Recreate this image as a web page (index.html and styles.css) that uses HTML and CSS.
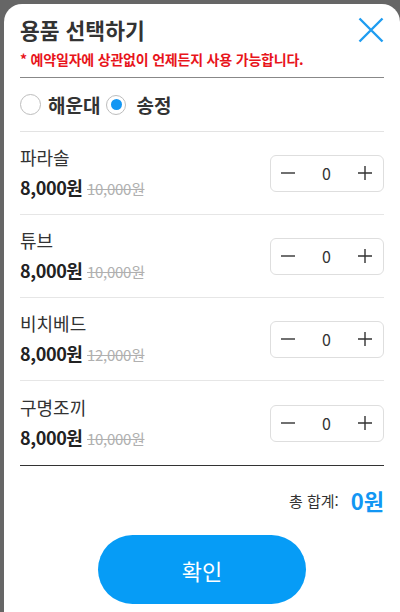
FILE: index.html
```html
<!DOCTYPE html>
<html lang="ko">
<head>
<meta charset="utf-8">
<title>용품 선택하기</title>
<link rel="stylesheet" href="styles.css">
</head>
<body>
<div class="modal">
  <div class="header">
    <h1 class="title">용품 선택하기</h1>
    <button class="close" aria-label="닫기">
      <svg width="26" height="26" viewBox="0 0 26 26"><path d="M1.5 1.5 L24.5 24.5 M24.5 1.5 L1.5 24.5" stroke="#1f9cf0" stroke-width="2.4" fill="none"/></svg>
    </button>
  </div>
  <p class="notice">* 예약일자에 상관없이 언제든지 사용 가능합니다.</p>
  <div class="places">
    <label class="place"><span class="radio"></span><span class="place-name">해운대</span></label>
    <label class="place"><span class="radio checked"></span><span class="place-name">송정</span></label>
  </div>
  <ul class="items">
    <li class="item">
      <div class="info">
        <div class="name">파라솔</div>
        <div class="price"><span class="sale">8,000원</span> <s class="orig">10,000원</s></div>
      </div>
      <div class="stepper">
        <svg class="op" width="14" height="14" viewBox="0 0 14 14"><path d="M0 7 H14" stroke="#333" stroke-width="1.4"/></svg>
        <span class="qty">0</span>
        <svg class="op" width="14" height="14" viewBox="0 0 14 14"><path d="M0 7 H14 M7 0 V14" stroke="#333" stroke-width="1.4"/></svg>
      </div>
    </li>
    <li class="item">
      <div class="info">
        <div class="name">튜브</div>
        <div class="price"><span class="sale">8,000원</span> <s class="orig">10,000원</s></div>
      </div>
      <div class="stepper">
        <svg class="op" width="14" height="14" viewBox="0 0 14 14"><path d="M0 7 H14" stroke="#333" stroke-width="1.4"/></svg>
        <span class="qty">0</span>
        <svg class="op" width="14" height="14" viewBox="0 0 14 14"><path d="M0 7 H14 M7 0 V14" stroke="#333" stroke-width="1.4"/></svg>
      </div>
    </li>
    <li class="item">
      <div class="info">
        <div class="name">비치베드</div>
        <div class="price"><span class="sale">8,000원</span> <s class="orig">12,000원</s></div>
      </div>
      <div class="stepper">
        <svg class="op" width="14" height="14" viewBox="0 0 14 14"><path d="M0 7 H14" stroke="#333" stroke-width="1.4"/></svg>
        <span class="qty">0</span>
        <svg class="op" width="14" height="14" viewBox="0 0 14 14"><path d="M0 7 H14 M7 0 V14" stroke="#333" stroke-width="1.4"/></svg>
      </div>
    </li>
    <li class="item last">
      <div class="info">
        <div class="name">구명조끼</div>
        <div class="price"><span class="sale">8,000원</span> <s class="orig">10,000원</s></div>
      </div>
      <div class="stepper">
        <svg class="op" width="14" height="14" viewBox="0 0 14 14"><path d="M0 7 H14" stroke="#333" stroke-width="1.4"/></svg>
        <span class="qty">0</span>
        <svg class="op" width="14" height="14" viewBox="0 0 14 14"><path d="M0 7 H14 M7 0 V14" stroke="#333" stroke-width="1.4"/></svg>
      </div>
    </li>
  </ul>
  <div class="total"><span class="total-label">총 합계:</span><span class="total-value">0원</span></div>
  <button class="confirm">확인</button>
</div>
</body>
</html>
```

FILE: styles.css
```css
html, body {
  margin: 0;
  padding: 0;
  background: #666666;
  height: 612px;
  overflow: hidden;
}
body {
  font-family: "Noto Sans CJK KR", "Noto Sans", sans-serif;
  color: #333;
}
.modal {
  margin: 4px 0 0 4px;
  width: 396px;
  height: 620px;
  box-sizing: border-box;
  background: #fff;
  border-radius: 18px 18px 0 0;
  padding: 10px 16px 0 16px;
}
.header {
  display: flex;
  justify-content: space-between;
  align-items: center;
  height: 32px;
}
.title {
  margin: 0;
  font-size: 21.5px;
  line-height: 32px;
  font-weight: 700;
  color: #333;
}
.close {
  border: 0;
  background: none;
  padding: 0;
  width: 26px;
  height: 26px;
  display: block;
}
.close svg { display: block; }
.notice {
  margin: 3px 0 0 0;
  padding-bottom: 8px;
  font-size: 14px;
  line-height: 20px;
  font-weight: 700;
  color: #e8141b;
  border-bottom: 1px solid #888;
  letter-spacing: -0.2px;
}
.places {
  display: flex;
  align-items: center;
  height: 53px;
  border-bottom: 1px solid #e3e3e3;
}
.place {
  display: flex;
  align-items: center;
}
.radio {
  width: 21px;
  height: 21px;
  box-sizing: border-box;
  border: 1px solid #bdbdbd;
  border-radius: 50%;
  display: flex;
  align-items: center;
  justify-content: center;
  margin-right: 7px;
}
.radio.checked {
  width: 20px;
  height: 20px;
  margin-right: 10px;
}
.radio.checked::after {
  content: "";
  width: 11px;
  height: 11px;
  border-radius: 50%;
  background: #1296f3;
}
.place-name {
  font-size: 19px;
  font-weight: 700;
  line-height: 24px;
  color: #333;
  margin-right: 6px;
}
.items {
  list-style: none;
  margin: 0;
  padding: 0;
}
.item {
  display: flex;
  align-items: center;
  justify-content: space-between;
  height: 82px;
  border-bottom: 1px solid #e6e6e6;
}
.item.last {
  height: 84px;
  border-bottom: 1px solid #333;
}
.info {
  display: flex;
  flex-direction: column;
}
.name {
  font-size: 18px;
  line-height: 24px;
  color: #333;
}
.price {
  margin-top: 5px;
  line-height: 26px;
}
.sale {
  font-size: 18px;
  font-weight: 700;
  color: #222;
  letter-spacing: -0.4px;
}
.orig {
  font-size: 15px;
  color: #b0b0b0;
  letter-spacing: -0.3px;
}
.stepper {
  width: 114px;
  height: 37px;
  box-sizing: border-box;
  border: 1px solid #dedede;
  border-radius: 6px;
  display: flex;
  align-items: center;
  justify-content: space-between;
  padding: 0 11px 0 10px;
}
.op {
  display: block;
}
.qty {
  font-size: 16px;
  line-height: 24px;
  color: #333;
}
.total {
  display: flex;
  justify-content: flex-end;
  align-items: center;
  height: 68px;
}
.total-label {
  font-size: 15px;
  color: #333;
  margin-right: 12px;
}
.total-value {
  font-size: 22px;
  font-weight: 700;
  color: #1296f3;
}
.confirm {
  display: block;
  margin: 1px auto 0 auto;
  width: 208px;
  height: 69px;
  border: 0;
  border-radius: 35px;
  background: #069cf6;
  color: #fff;
  font-family: "Noto Sans CJK KR", "Noto Sans", sans-serif;
  font-size: 22px;
  font-weight: 400;
}
```
